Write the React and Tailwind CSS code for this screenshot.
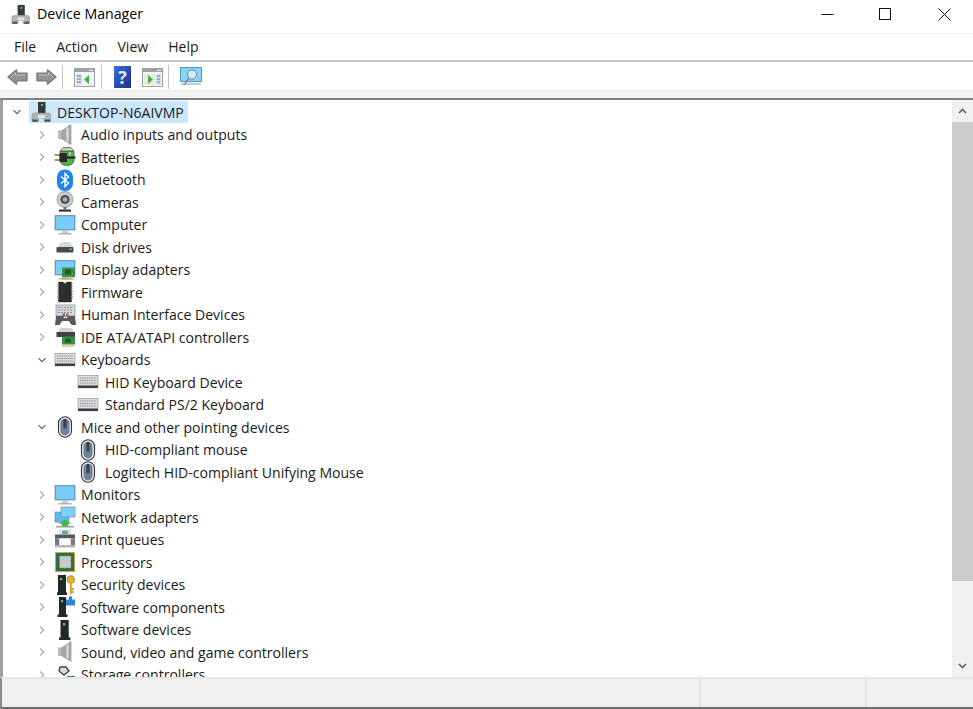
import React from "react";

const S = ({ children, w = 22, h = 22, vb = "0 0 22 22" }) => (
  <svg width={w} height={h} viewBox={vb} className="shrink-0 block">{children}</svg>
);

const TowerArt = () => (
  <>
    <rect x="8" y="1" width="7.5" height="11" fill="#33383d" />
    <rect x="11" y="3" width="2" height="2" fill="#48d048" />
    <path d="M2 20.5 V14 Q2 12 5 12 H18 Q20.5 12 20.5 14 V20.5 H14 V17 H8.5 V20.5 Z" fill="#b0b4b6" stroke="#7b7f82" strokeWidth="0.5" />
    <rect x="8" y="14" width="7" height="3" fill="#e3e4e5" />
    <rect x="2.5" y="18.5" width="5" height="2.2" fill="#4d5053" />
    <rect x="15" y="18.5" width="5" height="2.2" fill="#4d5053" />
  </>
);
const Tower = () => <S><TowerArt /></S>;
const Speaker = () => (
  <S>
    <rect x="4" y="6.5" width="5" height="8.5" fill="#b8bbbd" />
    <path d="M8 6.5 L17 0.5 V20.5 L8 15 Z" fill="#a5a8aa" stroke="#8a8d90" strokeWidth="0.6" />
    <path d="M13.5 3.5 V17.5" stroke="#d8dadb" strokeWidth="2.2" />
  </S>
);
const Battery = () => (
  <S>
    <path d="M6 5 H20 V15 Q19 19.5 13 19.5 Q7 19.5 6 15 Z" fill="#53b04a" stroke="#2a6a2d" strokeWidth="0.7" />
    <path d="M9 1.5 H17 L20 5 H6 Z" fill="#c9ccc9" stroke="#4c4f4c" strokeWidth="0.7" />
    <path d="M16 6 V10" stroke="#8ed67e" strokeWidth="2" />
    <path d="M0.5 9 H6 M0.5 14 H6" stroke="#8c7633" strokeWidth="1.4" />
    <rect x="5.5" y="7" width="7.5" height="9" rx="1" fill="#26292c" />
    <path d="M12 11.5 H21.5" stroke="#26292c" strokeWidth="2.2" />
  </S>
);
const Bluetooth = () => (
  <S>
    <rect x="3" y="0.5" width="16" height="21.5" rx="7.5" fill="#1d84f0" />
    <path d="M7 7.5 L14.5 14 L11 17.5 V4.5 L14.5 8 L7 14.5" fill="none" stroke="#fff" strokeWidth="1.4" />
  </S>
);
const Camera = () => (
  <S>
    <circle cx="11" cy="8.5" r="8" fill="#c8cacb" stroke="#8d8f91" strokeWidth="0.8" />
    <circle cx="11" cy="8.5" r="4.6" fill="#4e5155" />
    <circle cx="11" cy="8.5" r="2.2" fill="#a9b4bd" />
    <rect x="9.5" y="16" width="3" height="2.5" fill="#777" />
    <rect x="5" y="18.5" width="12" height="2.2" fill="#37393c" />
  </S>
);
const Monitor = ({ pcb }) => (
  <S>
    <rect x="1" y="1.5" width="20" height="14.5" fill="#4fb2e8" stroke="#6f8392" strokeWidth="0.7" />
    <rect x="2" y="2.5" width="18" height="12.5" fill="#79cdf6" />
    <rect x="8" y="16" width="6" height="3" fill="#c8ccce" />
    <rect x="4.5" y="19" width="13" height="1.5" fill="#aeb2b5" />
    {pcb && (
      <>
        <rect x="8" y="8.5" width="13" height="9.5" fill="#3c8e4d" />
        <rect x="11" y="10.5" width="6" height="5" fill="#1f5b2e" />
        <path d="M9 18 V21 M11 18 V21 M13 18 V21 M15 18 V21 M17 18 V21 M19 18 V21" stroke="#c9a63e" strokeWidth="1" />
      </>
    )}
  </S>
);
const Disk = () => (
  <S>
    <path d="M4 11 Q6 6 9 6 H14 Q17 6 19 11 Z" fill="#d5d7d8" />
    <rect x="2.5" y="11" width="17" height="5.5" rx="1" fill="#484b4e" />
    <rect x="15" y="12.5" width="3" height="1.5" fill="#46c846" />
  </S>
);
const Firmware = () => (
  <S>
    <path d="M4.5 1 H9 Q11 4 13 1 H17.5 V21 H4.5 Z" fill="#2c2e30" stroke="#111" strokeWidth="0.4" />
    <path d="M3 3 H5 M3 5.5 H5 M3 8 H5 M3 10.5 H5 M3 13 H5 M3 15.5 H5 M3 18 H5 M17 3 H19 M17 5.5 H19 M17 8 H19 M17 10.5 H19 M17 13 H19 M17 15.5 H19 M17 18 H19" stroke="#9a9c9e" strokeWidth="1" />
  </S>
);
const Hid = () => (
  <S>
    <rect x="2" y="1" width="19" height="11" fill="#d6d8da" stroke="#74777a" strokeWidth="0.6" />
    <path d="M4 3.5 H19 M4 6 H19 M4 8.5 H19" stroke="#8a8e91" strokeWidth="1" strokeDasharray="2 1" />
    <path d="M2 12 H9 L10 14 H13 L14 12 H21 L22 21 H17.5 L15 17 H8 L5.5 21 H1 Z" fill="#565a5e" />
    <rect x="8.5" y="9.5" width="2.5" height="3.5" fill="#3576c8" />
    <rect x="12" y="9.5" width="2.5" height="3.5" fill="#d05a3a" />
  </S>
);
const Ide = () => (
  <S>
    <path d="M4 6 Q5 2 8 2 H16 Q19 2 20 6 Z" fill="#d0d2d3" />
    <rect x="2.5" y="6" width="18.5" height="5" fill="#3f4245" />
    <rect x="8" y="10.5" width="13" height="8" fill="#3c8e4d" />
    <rect x="11" y="12.5" width="6" height="4" fill="#1f5b2e" />
    <path d="M9 18.5 V21 M11 18.5 V21 M13 18.5 V21 M15 18.5 V21 M17 18.5 V21 M19 18.5 V21" stroke="#c9a63e" strokeWidth="1" />
  </S>
);
const Keyboard = () => (
  <S>
    <rect x="1" y="4.5" width="20" height="11.5" fill="#dadcdd" stroke="#85888b" strokeWidth="0.6" />
    <path d="M3 7 H19 M3 9.5 H19 M3 12 H19" stroke="#8e9194" strokeWidth="1.1" strokeDasharray="1.5 0.7" />
    <rect x="1" y="14.5" width="20" height="2.6" fill="#3c3f42" />
  </S>
);
const Mouse = () => (
  <S>
    <rect x="4.5" y="0.8" width="13" height="20.4" rx="6.5" fill="#e3e6e9" stroke="#33373b" strokeWidth="1.1" />
    <rect x="6.5" y="2.8" width="9" height="16.4" rx="4.5" fill="#6f8398" />
    <rect x="9.5" y="3" width="3" height="9.5" rx="1.2" fill="#3b3e42" />
  </S>
);
const Network = () => (
  <S>
    <rect x="1" y="6" width="14" height="10" fill="#5cbcec" stroke="#69808f" strokeWidth="0.6" />
    <rect x="7" y="1" width="14" height="10" fill="#7dd0f7" stroke="#69808f" strokeWidth="0.6" />
    <rect x="3" y="16" width="8" height="1.2" fill="#b4b8ba" />
    <path d="M11 13.5 L17 18 H14 V20 H8 V18 H5 Z" fill="#3fbb4c" />
    <rect x="2" y="20" width="18" height="1.5" fill="#9a9ea1" />
  </S>
);
const Printer = () => (
  <S>
    <rect x="6" y="1.5" width="10" height="6" fill="#f4f4f4" stroke="#9b9b9b" strokeWidth="0.5" />
    <rect x="8" y="2" width="3" height="3" fill="#3fa9e0" />
    <rect x="11" y="2" width="3" height="3" fill="#4cc253" />
    <rect x="1" y="5.5" width="20" height="4" fill="#55585c" />
    <rect x="1" y="9.5" width="4.5" height="6.5" fill="#777b7f" />
    <rect x="16.5" y="9.5" width="4.5" height="6.5" fill="#777b7f" />
    <rect x="1" y="16" width="20" height="2.5" fill="#b3b6b8" />
    <rect x="5.5" y="9.5" width="11" height="6.5" fill="#fff" />
  </S>
);
const Cpu = () => (
  <S>
    <rect x="1" y="1" width="20" height="20" fill="#c8a94a" />
    <rect x="2" y="2" width="18" height="18" fill="#2f6c47" />
    <rect x="5.5" y="5" width="11.5" height="12" fill="#c9cbca" stroke="#5f8a70" strokeWidth="0.5" />
  </S>
);
const Security = () => (
  <S>
    <path d="M4 1 H12 V18.5 H13 V21 H3 V18.5 H4 Z" fill="#24272a" />
    <rect x="6" y="4" width="2.2" height="2.2" fill="#45d24a" />
    <circle cx="16.8" cy="5.5" r="3.9" fill="#e2b23e" stroke="#9b7420" strokeWidth="0.6" />
    <path d="M16.8 9 V20 M16.8 15 H20 M16.8 18 H20" stroke="#d2a233" strokeWidth="2" fill="none" />
  </S>
);
const SoftComp = () => (
  <S>
    <path d="M5 1 H12 V18.5 H13.5 V21 H3.5 V18.5 H5 Z" fill="#24272a" />
    <rect x="7" y="4" width="2.2" height="2.2" fill="#45d24a" />
    <rect x="12" y="3.5" width="9" height="6" fill="#2d83d6" />
    <rect x="15" y="0.5" width="3" height="3.5" fill="#2d83d6" />
  </S>
);
const SoftDev = () => (
  <S>
    <path d="M6.5 1 H15 V18.5 H16.5 V21 H5 V18.5 H6.5 Z" fill="#24272a" />
    <path d="M14.5 1 V18" stroke="#606468" strokeWidth="1" />
    <rect x="9" y="4" width="2.4" height="2.4" fill="#45d24a" />
  </S>
);
const Storage = () => (
  <S>
    <path d="M6 3 H12 L15 7 L10 11 L5 7 Z" fill="#ddd" stroke="#45484c" strokeWidth="1.4" />
    <rect x="13" y="12" width="8" height="4" fill="#3c8e4d" />
  </S>
);

const Chevron = ({ open }) => (
  <svg width="8" height="8" viewBox="0 0 8 8" className="shrink-0">
    {open ? (
      <path d="M0.5 2.2 L4 5.7 L7.5 2.2" fill="none" stroke="#5c5c5c" strokeWidth="1.1" />
    ) : (
      <path d="M2.2 0.5 L5.7 4 L2.2 7.5" fill="none" stroke="#a6a6a6" strokeWidth="1.1" />
    )}
  </svg>
);

const rows = [
  ["Audio inputs and outputs", Speaker],
  ["Batteries", Battery],
  ["Bluetooth", Bluetooth],
  ["Cameras", Camera],
  ["Computer", Monitor],
  ["Disk drives", Disk],
  ["Display adapters", () => <Monitor pcb />],
  ["Firmware", Firmware],
  ["Human Interface Devices", Hid],
  ["IDE ATA/ATAPI controllers", Ide],
  ["Keyboards", Keyboard, true, [["HID Keyboard Device", Keyboard], ["Standard PS/2 Keyboard", Keyboard]]],
  ["Mice and other pointing devices", Mouse, true, [["HID-compliant mouse", Mouse], ["Logitech HID-compliant Unifying Mouse", Mouse]]],
  ["Monitors", Monitor],
  ["Network adapters", Network],
  ["Print queues", Printer],
  ["Processors", Cpu],
  ["Security devices", Security],
  ["Software components", SoftComp],
  ["Software devices", SoftDev],
  ["Sound, video and game controllers", Speaker],
  ["Storage controllers", Storage],
];

const Row = ({ label, Icon, open, child }) => (
  <div className={`flex items-center h-[22.5px] shrink-0 ${child ? "pl-[74px]" : "pl-[35px]"}`}>
    {!child && (
      <span className="w-[8px] mr-[8px] flex">
        <Chevron open={open} />
      </span>
    )}
    <Icon />
    <span className={`${child ? "ml-[6px]" : "ml-[5px]"} whitespace-nowrap`}>{label}</span>
  </div>
);

const Sep = () => <div className="w-px h-[24px] bg-[#c4c4c4]" />;

const Arrow = ({ flip }) => (
  <svg width="21" height="18" viewBox="0 0 22 18" className={flip ? "-scale-x-100" : ""}>
    <path d="M1 9 L10 1.5 V5 H21 V13 H10 V16.5 Z" fill="#8f9395" stroke="#777a7c" strokeWidth="1.4" strokeLinejoin="round" />
    <path d="M4 9 L9 4.5 V7 H19" fill="none" stroke="#bcbec0" strokeWidth="1" />
  </svg>
);

const Pane = ({ right }) => (
  <svg width="21" height="20" viewBox="0 0 21 20">
    <rect x="0.5" y="1.5" width="20" height="18" fill="#f3f5f5" stroke="#9a9fa2" />
    <rect x="1" y="2" width="19" height="3" fill="#9da2a5" />
    <rect x="15" y="2.8" width="4" height="1.2" fill="#e4e6e7" />
    {right ? (
      <>
        <rect x="14" y="7" width="5" height="11" fill="#d6e3ee" />
        <path d="M15 9 H18 M15 12 H18 M15 15 H18" stroke="#5d7f9d" />
        <rect x="2" y="7" width="11" height="11" fill="#e6eadf" />
        <path d="M6 8 L11 12.5 L6 17 Z" fill="#3fae4b" />
      </>
    ) : (
      <>
        <rect x="2" y="7" width="6" height="11" fill="#d6e3ee" />
        <path d="M3 9 H7 M3 12 H7 M3 15 H7" stroke="#5d7f9d" />
        <path d="M15 8 L10 12.5 L15 17 Z" fill="#3fae4b" />
      </>
    )}
  </svg>
);

export default function App() {
  return (
    <div
      className="w-[973px] h-[709px] overflow-hidden bg-white flex flex-col text-[14.05px] text-[#1a1a1a]"
      style={{ fontFamily: '"Open Sans", "Noto Sans", sans-serif' }}
    >
      <div className="h-[34px] shrink-0 flex items-center pl-[10px] pb-[5px] border-b border-[#f0f0f0]">
        <S w={21} h={21}><TowerArt /></S>
        <span className="ml-[6px] text-black text-[14.2px]">Device Manager</span>
        <div className="ml-auto flex items-center">
          <svg width="13" height="13" viewBox="0 0 13 13" className="mr-[45px]"><path d="M0.5 6.5 H12.5" stroke="#111" /></svg>
          <svg width="13" height="13" viewBox="0 0 13 13" className="mr-[46px]"><rect x="0.5" y="0.5" width="11" height="11" fill="none" stroke="#111" /></svg>
          <svg width="13" height="13" viewBox="0 0 13 13" className="mr-[22px]"><path d="M0.5 0.5 L12.5 12.5 M12.5 0.5 L0.5 12.5" stroke="#111" /></svg>
        </div>
      </div>
      <div className="h-[26px] shrink-0 flex items-center pl-[14px] gap-[20px] border-b-2 border-[#c9c9c9] box-content">
        <span>File</span>
        <span>Action</span>
        <span>View</span>
        <span>Help</span>
      </div>
      <div className="h-[28px] shrink-0 flex items-center pl-[7px] pt-[2px] box-border border-b-0 shadow-[0_2px_0_#ececec] mb-[2px]">
        <Arrow />
        <span className="w-[8px]" />
        <Arrow flip />
        <span className="w-[5px]" />
        <Sep />
        <span className="w-[11px]" />
        <Pane />
        <span className="w-[6px]" />
        <Sep />
        <span className="w-[12px]" />
        <div className="w-[17px] h-[22px] bg-linear-to-br from-[#3c6fd8] to-[#1e2f8c] text-[#dfe6f5] font-bold text-[18px] leading-[22px] text-center">?</div>
        <span className="w-[11px]" />
        <Pane right />
        <span className="w-[5px]" />
        <Sep />
        <span className="w-[11px]" />
        <svg width="22" height="20" viewBox="0 0 22 20">
          <rect x="0.5" y="0.5" width="21" height="14" fill="#86d4f7" stroke="#4a9cc4" />
          <circle cx="12" cy="7.5" r="4.5" fill="#d5eefa" stroke="#5f7f90" strokeWidth="0.9" />
          <path d="M9 11 L4 18" stroke="#7e8e99" strokeWidth="1.6" />
          <path d="M1 17 H21" stroke="#9aa6ae" strokeWidth="1.2" />
        </svg>
      </div>
      <div className="h-[6px] shrink-0 bg-[#f3f3f3] border-b-2 border-[#808080] box-content" />
      <div className="flex-1 min-h-0 flex border-l-[3px] border-[#a0a0a0]">
        <div className="flex-1 min-w-0 overflow-hidden flex flex-col pt-[1px]">
          <div className="flex items-center h-[22.5px] shrink-0 pl-[10px]">
            <span className="w-[8px] mr-[8px] flex"><Chevron open /></span>
            <div className="flex items-center h-[22px] bg-[#cce8ff] pl-[1px] pr-[4px]">
              <Tower />
              <span className="ml-[5px] whitespace-nowrap">DESKTOP-N6AIVMP</span>
            </div>
          </div>
          {rows.map(([label, Icon, open, kids]) => (
            <React.Fragment key={label}>
              <Row label={label} Icon={Icon} open={open} />
              {kids && kids.map(([l, I]) => <Row key={l} label={l} Icon={I} child />)}
            </React.Fragment>
          ))}
        </div>
        <div className="w-[21px] shrink-0 bg-[#f0f0f0] flex flex-col items-center">
          <div className="h-[22px] w-full flex items-center justify-center shrink-0">
            <svg width="9" height="6" viewBox="0 0 9 6"><path d="M1 5 L4.5 1.5 L8 5" fill="none" stroke="#606060" strokeWidth="1.6" /></svg>
          </div>
          <div className="h-[459px] w-full bg-[#cdcdcd] shrink-0" />
          <div className="flex-1" />
          <div className="h-[22px] w-full flex items-center justify-center shrink-0">
            <svg width="9" height="6" viewBox="0 0 9 6"><path d="M1 1 L4.5 4.5 L8 1" fill="none" stroke="#606060" strokeWidth="1.6" /></svg>
          </div>
        </div>
      </div>
      <div className="h-[32px] shrink-0 flex bg-[#f0f0f0] border-t-2 border-[#e6e6e6] border-b-2 border-b-[#6e6e6e] border-l-2 border-l-[#8a8a8a]">
        <div className="w-[697px]" />
        <div className="w-[168px] border-l-2 border-r-2 border-[#e3e3e3]" />
      </div>
    </div>
  );
}
